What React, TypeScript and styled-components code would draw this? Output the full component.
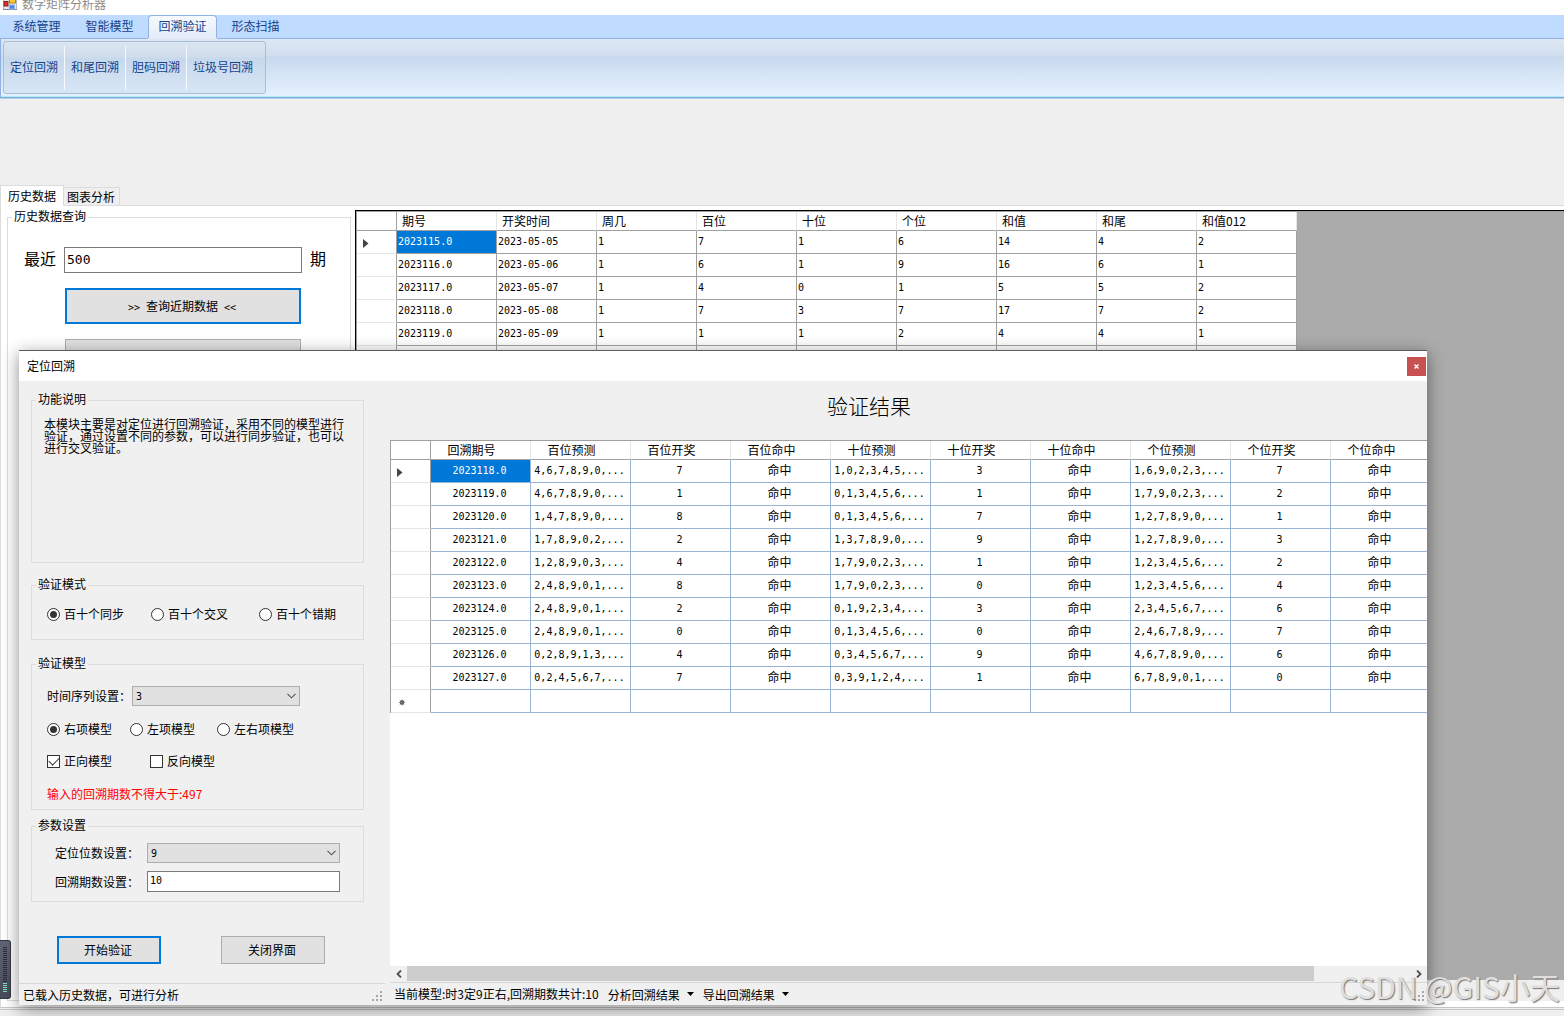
import React from "react";
import styled, { createGlobalStyle } from "styled-components";

const CJK = '"Noto Sans CJK SC", sans-serif';
const MONO = '"DejaVu Sans Mono", "Noto Sans CJK SC", monospace';

const GlobalStyle = createGlobalStyle`
  * { box-sizing: border-box; }
  body { margin: 0; background: #efefef; }
  button, input, select { font-family: inherit; font-size: inherit; color: inherit; margin: 0; }
`;

const Desktop = styled.div`
  position: relative;
  display: flex;
  flex-direction: column;
  min-height: 100vh;
  overflow: hidden;
  background: #efefef;
  color: #000;
  font: 12px/16px ${CJK};
`;

/* ---------- main window ---------- */

const AppTitle = styled.header`
  display: flex;
  gap: 5px;
  height: 15px;
  padding-left: 3px;
  background: #fff;
  color: #8c8c8c;
  line-height: 8px;
`;

const RibbonTabs = styled.nav`
  display: flex;
  align-items: flex-end;
  height: 24px;
  background: #bfdbff;
  border-bottom: 1px solid #8db2e3;
`;

const RibbonTab = styled.button<{ $active?: boolean }>`
  width: 69px;
  height: 23px;
  margin: 0 2px;
  padding: 0 0 3px;
  border: 1px solid ${(p) => (p.$active ? "#8db2e3" : "transparent")};
  border-bottom: 0;
  border-radius: 4px 4px 0 0;
  background: ${(p) => (p.$active ? "linear-gradient(#f6faff, #e3ecf8)" : "transparent")};
  box-shadow: ${(p) => (p.$active ? "0 1px 0 #e3ecf8" : "none")};
  color: #15428b;
`;

const RibbonPanel = styled.div`
  height: 59px;
  padding: 2px 2px;
  background: linear-gradient(#dde7f4, #d2dfef 16px, #c8d9ee 17px, #e4f0fd 56px);
  border-left: 1px solid #8db2e3;
  border-bottom: 1px solid #7fa6d6;
  box-shadow: inset 0 -1px 0 #aef0f8, 0 1px 0 #b8cfee;
`;

const RibbonGroup = styled.div`
  display: inline-flex;
  align-items: center;
  height: 53px;
  border: 1px solid #a9bfd6;
  border-radius: 3px;
  background: linear-gradient(#dce6f2, #cfdcec 15px, #c6d8ec 16px, #d7e6f5);
`;

const RibbonButton = styled.button`
  height: 44px;
  padding: 0 6px 3px;
  border: 0;
  border-right: 1px solid #f5f9fe;
  background: transparent;
  color: #15428b;
  &:last-child { padding-right: 12px; border-right: 0; }
`;

const Workspace = styled.main`
  flex: 1;
  display: flex;
  flex-direction: column;
  padding-top: 87px;
`;

const PageTabs = styled.div`
  display: flex;
  align-items: flex-end;
  height: 21px;
  box-shadow: inset 0 -1px 0 #dcdcdc;
`;

const PageTab = styled.button<{ $active?: boolean }>`
  height: ${(p) => (p.$active ? 21 : 19)}px;
  padding: ${(p) => (p.$active ? "0 7px 1px" : "0 4px 1px 3px")};
  border: 1px solid #dcdcdc;
  border-bottom-color: ${(p) => (p.$active ? "#fff" : "#dcdcdc")};
  border-left-width: ${(p) => (p.$active ? 1 : 0)}px;
  background: ${(p) => (p.$active ? "#fff" : "#efefef")};
`;

const TabPage = styled.section`
  flex: 1;
  display: flex;
  gap: 4px;
  margin-bottom: 8px;
  padding: 3px 0 6px 6px;
  background: #fff;
  border-left: 1px solid #dcdcdc;
  border-bottom: 1px solid #c6c6c6;
  box-shadow: 0 1px 0 #efefef, 0 2px 0 #c6c6c6;
`;

const GroupBox = styled.fieldset<{ $height?: number; $gap?: number }>`
  min-width: 0;
  height: ${(p) => (p.$height ? p.$height + "px" : "auto")};
  margin: 0 0 ${(p) => p.$gap || 0}px;
  padding: 0;
  border: 1px solid #dcdcdc;
  legend {
    margin-left: 4px;
    padding: 0 2px;
    height: 16px;
    line-height: 14px;
  }
`;

const HistoryBox = styled(GroupBox)`
  flex: 0 0 344px;
`;

const RecentRow = styled.div`
  display: grid;
  grid-template-columns: 32px 238px 16px;
  column-gap: 8px;
  align-items: start;
  margin: 22px 0 15px 16px;
  font-size: 16px;
  line-height: 22px;
`;

const TextBox = styled.input<{ $height: number; $size: number }>`
  width: 100%;
  height: ${(p) => p.$height}px;
  padding: 0 2px 2px;
  border: 1px solid #7a7a7a;
  border-radius: 0;
  background: #fff;
  font-family: ${MONO};
  font-size: ${(p) => p.$size}px;
`;

const PushButton = styled.button<{ $primary?: boolean; $height: number }>`
  height: ${(p) => p.$height}px;
  padding: 0 2px 2px 0;
  border: ${(p) => (p.$primary ? "2px solid #0078d7" : "1px solid #adadad")};
  background: #e1e1e1;
`;

const Chevrons = styled.span`
  font-family: ${MONO};
  font-size: 10px;
  white-space: pre;
`;

const QueryButtons = styled.div`
  display: grid;
  gap: 15px;
  margin: 0 49px 0 57px;
`;

const DataArea = styled.div`
  flex: 1;
  min-width: 0;
  display: flex;
  flex-direction: column;
  margin-top: 1px;
  border: 1px solid #000;
  border-width: 1px 0 0 1px;
`;

const DataSurface = styled.div`
  flex: 1;
  overflow: hidden;
  background: #ababab;
  border: 1px solid #a0a0a0;
  border-width: 1px 0 0 1px;
`;

const DataFooter = styled.div`
  height: 21px;
  background: #efefef;
`;

/* ---------- data grids ---------- */

const Grid = styled.table<{ $line: string; $center?: boolean; $head: number }>`
  table-layout: fixed;
  border-collapse: separate;
  border-spacing: 0;
  background: #fff;
  col { width: 100px; }
  col:first-child { width: 40px; }
  th, td {
    padding: ${(p) => (p.$center ? "0 2px 0 0" : "0 1px")};
    overflow: hidden;
    white-space: nowrap;
    text-align: ${(p) => (p.$center ? "center" : "left")};
    font-weight: 400;
    border: 0 solid ${(p) => p.$line};
    border-width: 0 1px 1px 0;
  }
  thead th {
    height: ${(p) => p.$head}px;
    padding: ${(p) => (p.$center ? "0 18px 0 0" : "0 0 0 5px")};
    line-height: 16px;
    border-color: #e5e5e5;
    border-bottom-color: #a0a0a0;
  }
  tbody tr { height: 23px; }
  td { font: 10px/16px ${MONO}; }
  thead th:first-child, tbody th {
    padding: 0 0 0 6px;
    text-align: left;
    border-right-color: #a0a0a0;
  }
  tbody th { border-bottom-color: #e5e5e5; line-height: 10px; }
  tbody th svg { display: block; margin-top: 2px; }
`;

const Cell = styled.td<{ $selected?: boolean; $cjk?: boolean }>`
  && {
    background: ${(p) => (p.$selected ? "#0078d7" : "transparent")};
    color: ${(p) => (p.$selected ? "#fff" : "#000")};
    font-size: ${(p) => (p.$cjk ? 12 : 10)}px;
  }
`;

/* ---------- dialog ---------- */

const Dialog = styled.section`
  position: absolute;
  top: 350px;
  right: 137px;
  bottom: 11px;
  left: 19px;
  display: flex;
  flex-direction: column;
  background: #f0f0f0;
  border-top: 1px solid #5c5c5c;
  box-shadow: 0 4px 16px rgba(0, 0, 0, 0.45);
`;

const DialogTitle = styled.header`
  display: flex;
  align-items: center;
  justify-content: space-between;
  height: 30px;
  padding: 0 1px 0 8px;
  background: #fff;
`;

const CloseButton = styled.button`
  width: 19px;
  height: 19px;
  padding: 0;
  border: 0;
  background: #c75050;
  line-height: 0;
`;

const DialogBody = styled.div`
  flex: 1;
  min-height: 0;
  display: grid;
  grid-template-columns: 366px minmax(0, 1fr);
  column-gap: 5px;
`;

const Column = styled.div`
  display: flex;
  flex-direction: column;
  min-height: 0;
`;

const Settings = styled.form`
  flex: 1;
  padding: 11px 21px 0 12px;
`;

const Description = styled.p`
  margin: 10px 11px 0 12px;
  line-height: 12px;
`;

const Stack = styled.div`
  display: grid;
  gap: 16px;
  padding: 14px 0 0 15px;
`;

const Choices = styled.div<{ $cols: string }>`
  display: grid;
  grid-template-columns: ${(p) => p.$cols};
  height: 16px;
`;

const Choice = styled.label`
  display: flex;
  align-items: center;
  gap: 4px;
  height: 14px;
  white-space: nowrap;
  input {
    appearance: none;
    display: grid;
    place-items: center;
    width: 13px;
    height: 13px;
    border: 1px solid #333;
    background: #fff;
  }
  input[type="radio"] { border-radius: 50%; }
  input[type="radio"]:checked::after {
    content: "";
    width: 7px;
    height: 7px;
    border-radius: 50%;
    background: #333;
  }
  input[type="checkbox"]:checked::after {
    content: "";
    width: 9px;
    height: 5px;
    margin-bottom: 3px;
    border: 1px solid #333;
    border-width: 0 0 1px 1px;
    transform: rotate(-45deg);
  }
`;

const SeriesRow = styled.div`
  display: grid;
  grid-template-columns: 85px 168px;
  align-items: center;
`;

const ParamRows = styled.div`
  display: grid;
  grid-template-columns: 92px 193px;
  row-gap: 8px;
  align-items: center;
  padding: 9px 0 0 23px;
`;

const SelectBox = styled.div`
  display: grid;
  align-items: center;
  select, svg { grid-area: 1 / 1; }
  select {
    appearance: none;
    height: 20px;
    padding: 0 3px;
    border: 1px solid #adadad;
    border-radius: 0;
    background: #e1e1e1;
    font-family: ${MONO};
    font-size: 10px;
  }
  svg { justify-self: end; margin-right: 4px; pointer-events: none; }
`;

const Warning = styled.p`
  margin: 0;
  color: #f00;
`;

const Actions = styled.div`
  display: grid;
  grid-template-columns: 104px 104px;
  column-gap: 60px;
  margin: 34px 0 0 26px;
`;

const StatusBar = styled.footer<{ $height: number }>`
  display: flex;
  align-items: center;
  height: ${(p) => p.$height}px;
  padding-left: 4px;
  border-top: 1px solid #d7d7d7;
`;

const StatusText = styled.span`
  white-space: nowrap;
`;

const StatusMenu = styled.button`
  display: flex;
  align-items: center;
  gap: 7px;
  margin-left: 9px;
  padding: 0;
  border: 0;
  background: transparent;
  white-space: nowrap;
`;

const GripSlot = styled.span`
  align-self: flex-end;
  margin-left: auto;
  padding: 0 2px 3px 0;
  line-height: 0;
`;

const ResultTitle = styled.h2`
  height: 59px;
  margin: 0;
  padding: 9px 0 0 437px;
  font-size: 21px;
  line-height: 30px;
  font-weight: 300;
`;

const ResultArea = styled.div`
  flex: 1;
  min-height: 0;
  overflow: hidden;
  background: #fff;
  border-top: 1px solid #a0a0a0;
  table { border-left: 1px solid #a0a0a0; }
`;

const ScrollBar = styled.div`
  display: grid;
  grid-template-columns: 17px minmax(0, 1fr) 17px;
  align-items: center;
  justify-items: center;
  height: 16px;
  background: #f0f0f0;
`;

const Thumb = styled.div`
  justify-self: start;
  width: calc(100% - 96px);
  height: 15px;
  align-self: start;
  background: #cdcdcd;
`;

const ArrowButton = styled.button`
  width: 17px;
  height: 15px;
  padding: 0;
  border: 0;
  background: transparent;
  line-height: 0;
`;

/* ---------- overlays ---------- */

const SideMeter = styled.aside`
  position: absolute;
  left: 0;
  bottom: 17px;
  width: 11px;
  height: 59px;
  padding: 6px 3px;
  border: 1px solid #353845;
  border-left: 0;
  border-radius: 0 3px 3px 0;
  background: linear-gradient(#606474, #474b59);
  line-height: 0;
`;

const Watermark = styled.div`
  position: absolute;
  right: 4px;
  bottom: 8px;
  color: #dedede;
  font-size: 30px;
  line-height: 44px;
  font-weight: 400;
  text-shadow: 1px 1px 1px #777;
  white-space: nowrap;
  pointer-events: none;
`;

const AppIcon = () => (
  <svg width="14" height="10" viewBox="0 0 14 10" aria-hidden="true">
    <rect x="0" y="-3" width="14" height="12.5" fill="#e8e8ee" stroke="#7d8694" />
    <rect x="1" y="1.5" width="4" height="4.5" fill="#d8392b" stroke="#8f1c14" />
    <rect x="6.5" y="-3" width="6" height="6" fill="#fbc92f" stroke="#b78510" />
    <rect x="6.5" y="5" width="5" height="4" fill="#4d86ea" stroke="#8fb1ee" />
  </svg>
);

const RowArrow = () => (
  <svg width="6" height="9" viewBox="0 0 6 9" aria-hidden="true">
    <path d="M0 0L5.5 4.5L0 9Z" fill="#444" />
  </svg>
);

const NewRowMark = () => (
  <svg width="9" height="7" viewBox="0 0 9 7" aria-hidden="true">
    <circle cx="5" cy="3.5" r="2.3" fill="#444" />
    <path d="M5 0.5V6.5M2 3.5H8M3 1.5L7 5.5M7 1.5L3 5.5" stroke="#777" strokeWidth="0.8" />
  </svg>
);

const Chevron = () => (
  <svg width="9" height="6" viewBox="0 0 9 6" fill="none" aria-hidden="true">
    <path d="M0.5 0.8L4.5 4.8L8.5 0.8" stroke="#555" strokeWidth="1.1" />
  </svg>
);

const ScrollArrow = ({ d }: { d: string }) => (
  <svg width="6" height="8" viewBox="0 0 6 8" fill="none" aria-hidden="true">
    <path d={d} stroke="#505050" strokeWidth="1.8" />
  </svg>
);

const Caret = () => (
  <svg width="7" height="4" viewBox="0 0 7 4" aria-hidden="true">
    <path d="M0 0H7L3.5 4Z" fill="#000" />
  </svg>
);

const Grip = () => (
  <svg width="11" height="11" viewBox="0 0 11 11" aria-hidden="true">
    {[[8, 0], [4, 4], [8, 4], [0, 8], [4, 8], [8, 8]].map(([x, y]) => (
      <rect key={`${x}-${y}`} x={x} y={y} width="2" height="2" fill="#a5a5a5" />
    ))}
  </svg>
);

const Meter = () => (
  <svg width="4" height="46" viewBox="0 0 4 46" aria-hidden="true">
    {Array.from({ length: 23 }, (_, i) => (
      <rect key={i} y={i * 2} width="4" height="1" fill={i > 17 ? "#7fe0c0" : "#2c2f3a"} />
    ))}
  </svg>
);

const historyColumns = ["期号", "开奖时间", "周几", "百位", "十位", "个位", "和值", "和尾", "和值012"];
const historyRows = [
  ["2023115.0", "2023-05-05", "1", "7", "1", "6", "14", "4", "2"],
  ["2023116.0", "2023-05-06", "1", "6", "1", "9", "16", "6", "1"],
  ["2023117.0", "2023-05-07", "1", "4", "0", "1", "5", "5", "2"],
  ["2023118.0", "2023-05-08", "1", "7", "3", "7", "17", "7", "2"],
  ["2023119.0", "2023-05-09", "1", "1", "1", "2", "4", "4", "1"],
  ["", "", "", "", "", "", "", "", ""],
];

const resultColumns = [
  "回溯期号", "百位预测", "百位开奖", "百位命中", "十位预测",
  "十位开奖", "十位命中", "个位预测", "个位开奖", "个位命中",
];
const hit = "命中";
const resultRows = [
  ["2023118.0", "4,6,7,8,9,0,...", "7", hit, "1,0,2,3,4,5,...", "3", hit, "1,6,9,0,2,3,...", "7", hit],
  ["2023119.0", "4,6,7,8,9,0,...", "1", hit, "0,1,3,4,5,6,...", "1", hit, "1,7,9,0,2,3,...", "2", hit],
  ["2023120.0", "1,4,7,8,9,0,...", "8", hit, "0,1,3,4,5,6,...", "7", hit, "1,2,7,8,9,0,...", "1", hit],
  ["2023121.0", "1,7,8,9,0,2,...", "2", hit, "1,3,7,8,9,0,...", "9", hit, "1,2,7,8,9,0,...", "3", hit],
  ["2023122.0", "1,2,8,9,0,3,...", "4", hit, "1,7,9,0,2,3,...", "1", hit, "1,2,3,4,5,6,...", "2", hit],
  ["2023123.0", "2,4,8,9,0,1,...", "8", hit, "1,7,9,0,2,3,...", "0", hit, "1,2,3,4,5,6,...", "4", hit],
  ["2023124.0", "2,4,8,9,0,1,...", "2", hit, "0,1,9,2,3,4,...", "3", hit, "2,3,4,5,6,7,...", "6", hit],
  ["2023125.0", "2,4,8,9,0,1,...", "0", hit, "0,1,3,4,5,6,...", "0", hit, "2,4,6,7,8,9,...", "7", hit],
  ["2023126.0", "0,2,8,9,1,3,...", "4", hit, "0,3,4,5,6,7,...", "9", hit, "4,6,7,8,9,0,...", "6", hit],
  ["2023127.0", "0,2,4,5,6,7,...", "7", hit, "0,3,9,1,2,4,...", "1", hit, "6,7,8,9,0,1,...", "0", hit],
  ["", "", "", "", "", "", "", "", "", ""],
];

interface DataGridProps {
  columns: string[];
  rows: string[][];
  line: string;
  head: number;
  center?: boolean;
  newRow?: boolean;
}

function DataGrid({ columns, rows, line, head, center, newRow }: DataGridProps) {
  return (
    <Grid $line={line} $head={head} $center={center} style={{ width: 40 + columns.length * 100 }}>
      <colgroup>
        <col />
        {columns.map((c) => <col key={c} />)}
      </colgroup>
      <thead>
        <tr>
          <th />
          {columns.map((c) => <th key={c} scope="col">{c}</th>)}
        </tr>
      </thead>
      <tbody>
        {rows.map((row, r) => (
          <tr key={r}>
            <th scope="row">
              {r === 0 && <RowArrow />}
              {newRow && r === rows.length - 1 && <NewRowMark />}
            </th>
            {row.map((value, c) => (
              <Cell key={c} $selected={r === 0 && c === 0} $cjk={value === hit}>{value}</Cell>
            ))}
          </tr>
        ))}
      </tbody>
    </Grid>
  );
}

interface OptionProps {
  type: "radio" | "checkbox";
  name: string;
  label: string;
  checked?: boolean;
}

const Option = ({ type, name, label, checked }: OptionProps) => (
  <Choice>
    <input type={type} name={name} defaultChecked={checked} />
    {label}
  </Choice>
);

export default function App() {
  return (
    <Desktop>
      <GlobalStyle />
      <AppTitle><AppIcon />数字矩阵分析器</AppTitle>
      <RibbonTabs>
        <RibbonTab>系统管理</RibbonTab>
        <RibbonTab>智能模型</RibbonTab>
        <RibbonTab $active>回溯验证</RibbonTab>
        <RibbonTab>形态扫描</RibbonTab>
      </RibbonTabs>
      <RibbonPanel>
        <RibbonGroup>
          <RibbonButton>定位回溯</RibbonButton>
          <RibbonButton>和尾回溯</RibbonButton>
          <RibbonButton>胆码回溯</RibbonButton>
          <RibbonButton>垃圾号回溯</RibbonButton>
        </RibbonGroup>
      </RibbonPanel>

      <Workspace>
        <PageTabs>
          <PageTab $active>历史数据</PageTab>
          <PageTab>图表分析</PageTab>
        </PageTabs>
        <TabPage>
          <HistoryBox>
            <legend>历史数据查询</legend>
            <RecentRow>
              <label htmlFor="recent">最近</label>
              <TextBox id="recent" $height={26} $size={13} defaultValue="500" />
              <span>期</span>
            </RecentRow>
            <QueryButtons>
              <PushButton $primary $height={36}>
                <Chevrons>{">> "}</Chevrons>查询近期数据<Chevrons>{" <<"}</Chevrons>
              </PushButton>
              <PushButton $height={36} aria-label="查询" />
            </QueryButtons>
          </HistoryBox>
          <DataArea>
            <DataSurface>
              <DataGrid columns={historyColumns} rows={historyRows} line="#a0a0a0" head={19} />
            </DataSurface>
            <DataFooter />
          </DataArea>
        </TabPage>
      </Workspace>

      <SideMeter><Meter /></SideMeter>

      <Dialog role="dialog" aria-labelledby="dialog-title">
        <DialogTitle>
          <span id="dialog-title">定位回溯</span>
          <CloseButton aria-label="关闭">
            <svg width="5" height="5" viewBox="0 0 5 5" aria-hidden="true">
              <path d="M0.5 0.5L4.5 4.5M4.5 0.5L0.5 4.5" stroke="#fff" strokeWidth="1.4" />
            </svg>
          </CloseButton>
        </DialogTitle>
        <DialogBody>
          <Column>
            <Settings>
              <GroupBox $height={171} $gap={14}>
                <legend>功能说明</legend>
                <Description>
                  本模块主要是对定位进行回溯验证，采用不同的模型进行验证，通过设置不同的参数，可以进行同步验证，也可以进行交叉验证。
                </Description>
              </GroupBox>
              <GroupBox $height={63} $gap={16}>
                <legend>验证模式</legend>
                <Stack>
                  <Choices $cols="104px 108px auto">
                    <Option type="radio" name="mode" label="百十个同步" checked />
                    <Option type="radio" name="mode" label="百十个交叉" />
                    <Option type="radio" name="mode" label="百十个错期" />
                  </Choices>
                </Stack>
              </GroupBox>
              <GroupBox $height={154} $gap={8}>
                <legend>验证模型</legend>
                <Stack>
                  <SeriesRow>
                    <label htmlFor="series">时间序列设置：</label>
                    <SelectBox>
                      <select id="series"><option>3</option></select>
                      <Chevron />
                    </SelectBox>
                  </SeriesRow>
                  <Choices $cols="83px 87px auto">
                    <Option type="radio" name="side" label="右项模型" checked />
                    <Option type="radio" name="side" label="左项模型" />
                    <Option type="radio" name="side" label="左右项模型" />
                  </Choices>
                  <Choices $cols="103px auto">
                    <Option type="checkbox" name="forward" label="正向模型" checked />
                    <Option type="checkbox" name="reverse" label="反向模型" />
                  </Choices>
                  <Warning>输入的回溯期数不得大于:497</Warning>
                </Stack>
              </GroupBox>
              <GroupBox $height={84}>
                <legend>参数设置</legend>
                <ParamRows>
                  <label htmlFor="digits">定位位数设置：</label>
                  <SelectBox>
                    <select id="digits"><option>9</option></select>
                    <Chevron />
                  </SelectBox>
                  <label htmlFor="periods">回溯期数设置：</label>
                  <TextBox id="periods" $height={21} $size={10} defaultValue="10" />
                </ParamRows>
              </GroupBox>
              <Actions>
                <PushButton type="button" $primary $height={28}>开始验证</PushButton>
                <PushButton type="button" $height={28}>关闭界面</PushButton>
              </Actions>
            </Settings>
            <StatusBar $height={22}>
              <StatusText>已载入历史数据，可进行分析</StatusText>
              <GripSlot><Grip /></GripSlot>
            </StatusBar>
          </Column>
          <Column>
            <ResultTitle>验证结果</ResultTitle>
            <ResultArea>
              <DataGrid columns={resultColumns} rows={resultRows} line="#9ab4d3" head={19} center newRow />
            </ResultArea>
            <ScrollBar>
              <ArrowButton aria-label="向左滚动"><ScrollArrow d="M5 0.5L1.5 4L5 7.5" /></ArrowButton>
              <Thumb />
              <ArrowButton aria-label="向右滚动"><ScrollArrow d="M1 0.5L4.5 4L1 7.5" /></ArrowButton>
            </ScrollBar>
            <StatusBar $height={23}>
              <StatusText>当前模型:时3定9正右,回溯期数共计:10</StatusText>
              <StatusMenu>分析回溯结果<Caret /></StatusMenu>
              <StatusMenu>导出回溯结果<Caret /></StatusMenu>
              <GripSlot><Grip /></GripSlot>
            </StatusBar>
          </Column>
        </DialogBody>
      </Dialog>

      <Watermark>CSDN @GIS小天</Watermark>
    </Desktop>
  );
}
